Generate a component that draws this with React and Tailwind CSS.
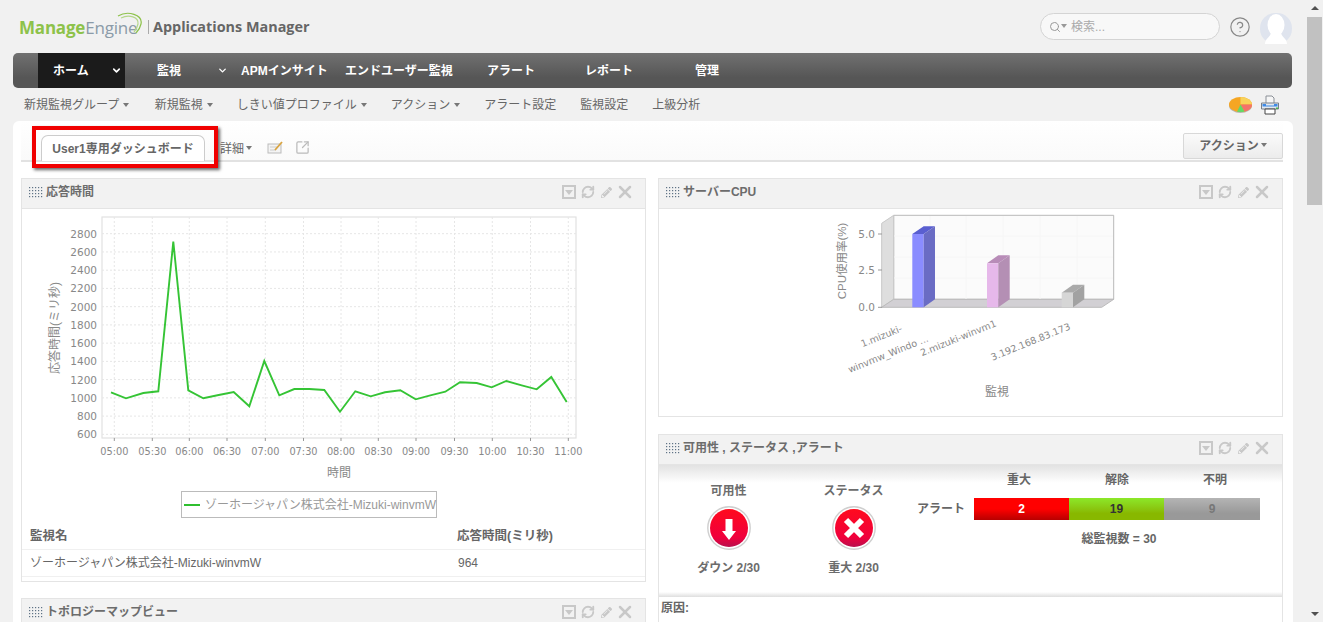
import { RefreshCw, X, SquareArrowOutUpRight, ChevronDown, Search, CircleHelp } from "lucide-react";
import { FaPencilAlt } from "react-icons/fa";

const yTicks = [2800, 2600, 2400, 2200, 2000, 1800, 1600, 1400, 1200, 1000, 800, 600];
const xTicks = [
    ["05:00", 114.3], ["05:30", 152.3], ["06:00", 189.3], ["06:30", 227], ["07:00", 265.3], ["07:30", 303.5], ["08:00", 341],
    ["08:30", 378.3], ["09:00", 416], ["09:30", 454.5], ["10:00", 492.3], ["10:30", 530.5], ["11:00", 568.3],
];
const linePoints = "111,392.3 126,398.3 143.3,393 158.3,391.3 173.3,241.7 188.3,390.3 203.3,398.3 218.7,395 233.7,392 249.3,406.3 264.3,361 279.3,395.3 294.3,389 309.3,389 324.3,390 340,411.7 355.3,391.3 370.7,396.3 385,392.3 400.3,390.3 415.7,399.3 430.3,395.3 445.3,391.7 460,382.3 476.7,383 491.7,387.3 506.3,381 521.7,385.3 536.7,389.3 551.3,377 566.7,402";

const subNav = [
    ["新規監視グループ", true], ["新規監視", true], ["しきい値プロファイル", true], ["アクション", true],
    ["アラート設定", false], ["監視設定", false], ["上級分析", false],
];

function Caret({ className = "border-t-[#777] ml-[4px]" }) {
    return <span className={`inline-block mb-[2px] border-x-[3px] border-t-[4px] border-x-transparent ${className}`} />;
}

function Grip() {
    const dots = [];
    for (let r = 0; r < 4; r++) {
        for (let c = 0; c < 5; c++) {
            dots.push(<rect key={`${r}-${c}`} x={c * 3} y={r * 3} width="1.2" height="1.2" fill="#5f7386" />);
        }
    }
    return <svg width="14" height="11" className="mr-[3px] shrink-0">{dots}</svg>;
}

function PanelHeader({ title }) {
    return (
        <div className="h-[30px] bg-[#f2f2f2] border-b border-[#e4e4e4] flex items-center pl-[7px] pr-[10px] pb-[3px]">
            <Grip />
            <span className="text-[12px] font-bold text-[#6c6c6c]">{title}</span>
            <div className="ml-auto flex items-center text-[#c8c8c8]">
                <span className="w-[14px] h-[14px] border-2 border-[#c8c8c8] flex items-center justify-center">
                    <span className="border-x-[4px] border-t-[5px] border-x-transparent border-t-[#c8c8c8]" />
                </span>
                <RefreshCw size={14} strokeWidth={3.2} className="ml-[5px]" />
                <FaPencilAlt size={11} className="ml-[6px]" />
                <X size={20} strokeWidth={3} className="ml-[3px]" />
            </div>
        </div>
    );
}

function ResponseChart() {
    return (
        <svg width="623" height="282" viewBox="22 209 623 282" className="block">
            <rect x="102" y="217" width="474" height="221" fill="#fff" stroke="#e2e2e2" strokeWidth="1.2" />
            {yTicks.map((v, i) => {
                const y = 233.7 + i * 18.24;
                return (
                    <g key={v}>
                        <line x1="102" x2="576" y1={y} y2={y} stroke="#e6e6e6" strokeDasharray="2 2" />
                        <text x="97" y={y + 4} textAnchor="end" fontSize="10.5" fill="#888" fontFamily="DejaVu Sans">{v}</text>
                    </g>
                );
            })}
            {xTicks.map(([t, x]) => (
                <g key={t}>
                    <line x1={x} x2={x} y1="217" y2="438" stroke="#e6e6e6" strokeDasharray="2 2" />
                    <line x1={x} x2={x} y1="438" y2="441" stroke="#999" />
                    <text x={x} y="455" textAnchor="middle" fontSize="9.8" fill="#888" fontFamily="DejaVu Sans">{t}</text>
                </g>
            ))}
            <polyline points={linePoints} fill="none" stroke="#35c435" strokeWidth="1.9" />
            <text x="339" y="477" textAnchor="middle" fontSize="12" fill="#888">時間</text>
            <text transform="translate(58.5 328) rotate(-90)" textAnchor="middle" fontSize="12" fill="#888">応答時間(ミリ秒)</text>
        </svg>
    );
}

function CpuChart() {
    return (
        <svg width="623" height="208" viewBox="659 209 623 208" className="block">
            <polygon points="893.7,215.3 1113.7,215.3 1113.7,299.3 893.7,299.3" fill="#fbfbfb" stroke="#b8b8b8" />
            <polygon points="881.7,223.3 893.7,215.3 893.7,299.3 881.7,307.3" fill="#dedede" stroke="#c8c8c8" />
            <polygon points="881.7,307.3 893.7,299.3 1113.7,299.3 1101.7,307.3" fill="#d2d0d4" stroke="#bbb" />
            {[930, 966, 1003, 1040, 1077].map((x) => <line key={x} x1={x} x2={x} y1="216" y2="299" stroke="#f6f6f6" />)}
            {[236, 257, 278].map((y) => <line key={y} x1="894" x2="1113" y1={y} y2={y} stroke="#f6f6f6" />)}
            <polygon points="912.3,234 923.7,234 935,226.3 923.7,226.3" fill="#5a5fd0" />
            <rect x="912.3" y="234" width="11.4" height="73.3" fill="#8a8cff" />
            <polygon points="923.7,234 935,226.3 935,299.3 923.7,307.3" fill="#6a6cc4" />
            <polygon points="987,263.3 998.3,263.3 1009.7,255.3 998.3,255.3" fill="#b88cb8" />
            <rect x="987" y="263.3" width="11.3" height="44" fill="#e6b8ea" />
            <polygon points="998.3,263.3 1009.7,255.3 1009.7,299.3 998.3,307.3" fill="#b48fb4" />
            <polygon points="1061.7,292.7 1073,292.7 1084.3,284.7 1073,284.7" fill="#aaa" />
            <rect x="1061.7" y="292.7" width="11.3" height="14.6" fill="#d6d6d6" />
            <polygon points="1073,292.7 1084.3,284.7 1084.3,299.3 1073,307.3" fill="#a2a2a2" />
            {[["5.0", 234], ["2.5", 270], ["0.0", 307.3]].map(([t, y]) => (
                <g key={t}>
                    <line x1="878" x2="882" y1={y} y2={y} stroke="#999" />
                    <text x="875" y={y + 4} textAnchor="end" fontSize="10.5" fill="#888" fontFamily="DejaVu Sans">{t}</text>
                </g>
            ))}
            <g fontSize="9.5" fill="#888" fontFamily="DejaVu Sans" textAnchor="end">
                <text transform="translate(903 331) rotate(-22)">1.mizuki-</text>
                <text transform="translate(929 341) rotate(-22)">winvmw_Windo ...</text>
                <text transform="translate(997 326) rotate(-22)">2.mizuki-winvm1</text>
                <text transform="translate(1071 329) rotate(-22)">3.192.168.83.173</text>
            </g>
            <text x="997" y="396" textAnchor="middle" fontSize="12" fill="#888">監視</text>
            <text transform="translate(846 261) rotate(-90)" textAnchor="middle" fontSize="11.5" fill="#888">CPU使用率(%)</text>
        </svg>
    );
}

function StatusIcon({ id, children }) {
    return (
        <svg width="44" height="44" viewBox="0 0 44 44" className="block">
            <defs>
                <linearGradient id={id} x1="0" y1="0" x2="0" y2="1">
                    <stop offset="0" stopColor="#ff0a1e" />
                    <stop offset="0.75" stopColor="#f0003c" />
                    <stop offset="1" stopColor="#b8104e" />
                </linearGradient>
            </defs>
            <circle cx="22" cy="22" r="21.2" fill="#fff" stroke="#cfcfcf" strokeWidth="1.4" />
            <circle cx="22" cy="22" r="19" fill={`url(#${id})`} />
            {children}
        </svg>
    );
}

function StatusCol({ id, title, caption, children }) {
    return (
        <div className="w-[125px] flex flex-col items-center text-[12px] font-bold text-[#6c6c6c]">
            <div className="mb-[6px]">{title}</div>
            <StatusIcon id={id}>{children}</StatusIcon>
            <div className="mt-[9px]">{caption}</div>
        </div>
    );
}

export default function App() {
    return (
        <div className="h-[622px] w-[1323px] overflow-hidden flex bg-[#f1f1f1] font-['Liberation_Sans','Noto_Sans_CJK_JP',sans-serif] text-[#666]">

            <div className="w-[1306px] shrink-0">

                <div className="h-[53px] flex items-start">
                    <div className="ml-[19px] mt-[11px] flex items-center h-[32px]">
                        <div className="relative text-[17px] tracking-[-0.2px] leading-none w-[123px] font-['Open_Sans',sans-serif]">
                            <span className="font-bold text-[#8dc24a]">Manage</span>
                            <span className="text-[#8b9ba8]">Engine</span>
                            <svg width="30" height="26" className="absolute left-[96px] top-[-8px]" fill="none">
                                <path d="M3 5 C13 -1 28 4 26 13 C25 18 23 20 21 22" stroke="#8dc24a" strokeWidth="1.2" />
                                <path d="M6 7 C14 3 24 6 23 13 C22 17 21 19 19 21" stroke="#b4d68a" strokeWidth="1.2" />
                            </svg>
                        </div>
                        <div className="w-px h-[14px] bg-[#aaa] ml-[6px]" />
                        <div className="ml-[4px] text-[14.4px] font-bold text-[#666] font-['Open_Sans',sans-serif]">Applications Manager</div>
                    </div>
                    <div className="ml-auto mr-[14px] mt-[13px] flex items-start">
                        <div className="w-[180px] h-[27px] rounded-full border border-[#d4d4d4] bg-[#f8f8f8] flex items-center pl-[8px] text-[12px] text-[#aaa]">
                            <Search size={12} className="text-[#999]" />
                            <Caret className="border-t-[#999] ml-[0px]" />
                            <span className="ml-[4px]">検索...</span>
                        </div>
                        <CircleHelp size={22} strokeWidth={1.3} className="ml-[9px] mt-[3px] text-[#888]" />
                        <svg width="32" height="31" viewBox="0 0 32 31" className="ml-[9px]">
                            <rect width="32" height="31" rx="15" fill="#dfe4ee" />
                            <ellipse cx="16" cy="12" rx="8.5" ry="11" fill="#fff" />
                            <path d="M11 19 C11 24 5 25 5 31 H27 C27 25 21 24 21 19 Z" fill="#fff" />
                        </svg>
                    </div>
                </div>

                <div className="mx-[13px] w-[1279px] h-[35px] rounded-[5px] bg-gradient-to-b from-[#717171] to-[#565656] to-70% flex text-[12px] font-bold text-white">
                    <div className="ml-[25px] w-[87px] bg-[#1b1b1b] flex items-center pl-[15px]">
                        ホーム
                        <ChevronDown size={11} strokeWidth={3.5} className="ml-[22px]" />
                    </div>
                    <div className="w-[116px] flex items-center pl-[32px]">
                        監視
                        <ChevronDown size={11} strokeWidth={3} className="ml-[36px]" />
                    </div>
                    <div className="w-[104px] flex items-center">APMインサイト</div>
                    <div className="w-[142px] flex items-center">エンドユーザー監視</div>
                    <div className="w-[98px] flex items-center">アラート</div>
                    <div className="w-[110px] flex items-center">レポート</div>
                    <div className="flex items-center">管理</div>
                </div>

                <div className="h-[33px] flex items-center pl-[24px] pr-[26px] text-[12px] text-[#666] gap-[24px]">
                    {subNav.map(([label, caret]) => (
                        <span key={label} className="whitespace-nowrap first:pr-[1.5px]">{label}{caret && <Caret />}</span>
                    ))}
                    <div className="ml-auto flex items-center gap-[8px]">
                        <svg width="23" height="16" viewBox="0 0 23 16">
                            <ellipse cx="11.5" cy="8.5" rx="11.5" ry="7.5" fill="#b9b4ad" />
                            <ellipse cx="11.5" cy="7.5" rx="11.5" ry="7.5" fill="#f5a623" />
                            <path d="M11.5 7.5 L23 7.5 A11.5 7.5 0 0 0 11.5 0 Z" fill="#f8d25a" />
                            <path d="M11.5 7.5 H23 A11.5 7.5 0 0 1 15.5 14.5 Z" fill="#f4726a" />
                            <path d="M11.5 7.5 L15.5 14.5 A11.5 7.5 0 0 1 8 14.7 Z" fill="#66d866" />
                        </svg>
                        <svg width="20" height="20" viewBox="0 0 20 20">
                            <path d="M6 1 H12 L14 3 V9 H6 Z" fill="#f6f6f6" stroke="#8a8f96" />
                            <path d="M1.5 8 H18.5 V14 H1.5 Z" fill="#e3e8ee" stroke="#777f89" />
                            <path d="M2.5 9 H6 V10.5 H14 V9 H17.5 V11.5 H2.5 Z" fill="#3f8ae6" />
                            <path d="M5 14 H15 V19 H5 Z" fill="#fff" stroke="#444" />
                            <rect x="16" y="12.5" width="2" height="1.5" fill="#49b649" />
                        </svg>
                    </div>
                </div>

                <div className="ml-[13px] w-[1280px] rounded-t-[6px] bg-white pl-[8px] pr-[10px] h-[501px] overflow-hidden">

                    <div className="relative h-[41px] border-b-2 border-[#e2e2e2] bg-gradient-to-b from-white to-[#fafafa] flex items-end">
                        <div className="ml-[20px] w-[164px] h-[26px] -mb-[1px] rounded-t-[7px] border border-b-0 border-[#ccc] bg-white flex items-center justify-center text-[12px] font-bold text-[#666]">
                            User1専用ダッシュボード
                        </div>
                        <div className="ml-[15px] h-[26px] pt-[3px] flex items-center text-[12px]">
                            詳細<Caret className="border-t-[#777] ml-[2px]" />
                        </div>
                        <svg width="17" height="15" viewBox="0 0 17 15" className="ml-[15px] mb-[5px]" fill="none">
                            <rect x="1" y="4" width="13" height="9" fill="#f4f4f4" stroke="#bbb" />
                            <path d="M3 7h8M3 10h6" stroke="#ccc" />
                            <path d="M8 10 L15 2" stroke="#d9a441" strokeWidth="1.8" />
                        </svg>
                        <SquareArrowOutUpRight size={15} strokeWidth={2} className="ml-[11px] mb-[5px] text-[#bbb]" />
                        <div className="ml-auto mb-[1px] w-[100px] h-[26px] border border-[#d8d8d8] rounded-[2px] bg-gradient-to-b from-[#fafafa] to-[#ececec] flex items-center justify-center text-[12px] font-bold text-[#666]">
                            アクション<Caret className="border-t-[#777] ml-[2px]" />
                        </div>
                        {/* red highlight drawn over the tab */}
                        <div className="absolute left-[11px] top-[5px] w-[186px] h-[42px] border-[4px] border-[#f00000] shadow-[2px_2px_3px_rgba(0,0,0,0.6)]" />
                    </div>

                    <div className="mt-[16px] grid grid-cols-[625px_625px] gap-x-[12px] items-start">

                        <div className="flex flex-col gap-[16px]">
                            <div className="h-[404px] border border-[#e4e4e4]">
                                <PanelHeader title="応答時間" />
                                <ResponseChart />
                                <div className="ml-[159px] w-[256px] h-[27px] border border-[#bbb] flex items-center pl-[2px] text-[12px] text-[#999] whitespace-nowrap">
                                    <span className="w-[16px] h-[2px] bg-[#2fbf2f] mr-[5px]" />
                                    ゾーホージャパン株式会社-Mizuki-winvmW
                                </div>
                                <div className="mt-[5px] h-[27px] flex items-center border-b border-[#f0f0f0] pl-[8px] text-[12.5px] font-bold text-[#666]">
                                    <span className="w-[427px]">監視名</span>
                                    <span>応答時間(ミリ秒)</span>
                                </div>
                                <div className="h-[27px] flex items-center border-b border-[#f0f0f0] pl-[8px] text-[12px] text-[#666]">
                                    <span className="w-[428px]">ゾーホージャパン株式会社-Mizuki-winvmW</span>
                                    <span>964</span>
                                </div>
                            </div>
                            <div className="border border-[#e4e4e4] h-[60px]">
                                <PanelHeader title="トポロジーマップビュー" />
                            </div>
                        </div>

                        <div className="flex flex-col gap-[17px]">
                            <div className="h-[239px] border border-[#e4e4e4]">
                                <PanelHeader title="サーバーCPU" />
                                <CpuChart />
                            </div>
                            <div className="border border-[#e4e4e4] h-[220px]">
                                <PanelHeader title="可用性 , ステータス ,アラート" />
                                <div className="h-[127px] bg-gradient-to-b from-[#e2e2e2] to-white to-[14%] flex">
                                    <div className="flex pl-[7px] pt-[17px]">
                                        <StatusCol id="downGrad" title="可用性" caption="ダウン 2/30">
                                            <path d="M18.5 13h7v12h3.5L22 34l-7-9h3.5z" fill="#fff" />
                                        </StatusCol>
                                        <StatusCol id="critGrad" title="ステータス" caption="重大 2/30">
                                            <path d="M14 14 L30 30 M30 14 L14 30" stroke="#fff" strokeWidth="6" />
                                        </StatusCol>
                                    </div>
                                    <div className="pt-[6px] ml-[1px]">
                                        <div className="flex pl-[57px] text-[12px] font-bold text-[#666] h-[27px]">
                                            <span className="w-[98px] text-center -ml-[4px]">重大</span>
                                            <span className="w-[98px] text-center">解除</span>
                                            <span className="w-[98px] text-center">不明</span>
                                        </div>
                                        <div className="flex items-center">
                                            <span className="w-[57px] text-[12px] font-bold text-[#666]">アラート</span>
                                            <div className="w-[95px] h-[22px] bg-gradient-to-b from-[#ff0000] from-50% to-[#b80000] text-white text-[12px] font-bold flex items-center justify-center">2</div>
                                            <div className="w-[95px] h-[22px] bg-gradient-to-b from-[#8ce828] to-[#88b800] to-70% text-[#333] text-[12px] font-bold flex items-center justify-center">19</div>
                                            <div className="w-[96px] h-[22px] bg-gradient-to-b from-[#b4b4b4] to-[#999] to-70% text-[#777] text-[12px] font-bold flex items-center justify-center">9</div>
                                        </div>
                                        <div className="pl-[57px] mt-[10px] text-center text-[12px] font-bold text-[#666]">総監視数 = 30</div>
                                    </div>
                                </div>
                                <div className="h-[5px] bg-gradient-to-b from-white to-[#dedede]" />
                                <div className="pl-[2px] pt-[2px] text-[12px] font-bold text-[#666]">原因:</div>
                            </div>
                        </div>

                    </div>
                </div>
            </div>

            <div className="w-[17px] bg-[#f1f1f1] flex flex-col items-center relative">
                <span className="mt-[6px] border-x-[4px] border-b-[4px] border-x-transparent border-b-[#505050]" />
                <div className="mt-[7px] w-[15px] h-[188px] bg-[#c1c1c1]" />
                <span className="absolute bottom-[6px] border-x-[4px] border-t-[4px] border-x-transparent border-t-[#505050]" />
            </div>

        </div>
    );
}
